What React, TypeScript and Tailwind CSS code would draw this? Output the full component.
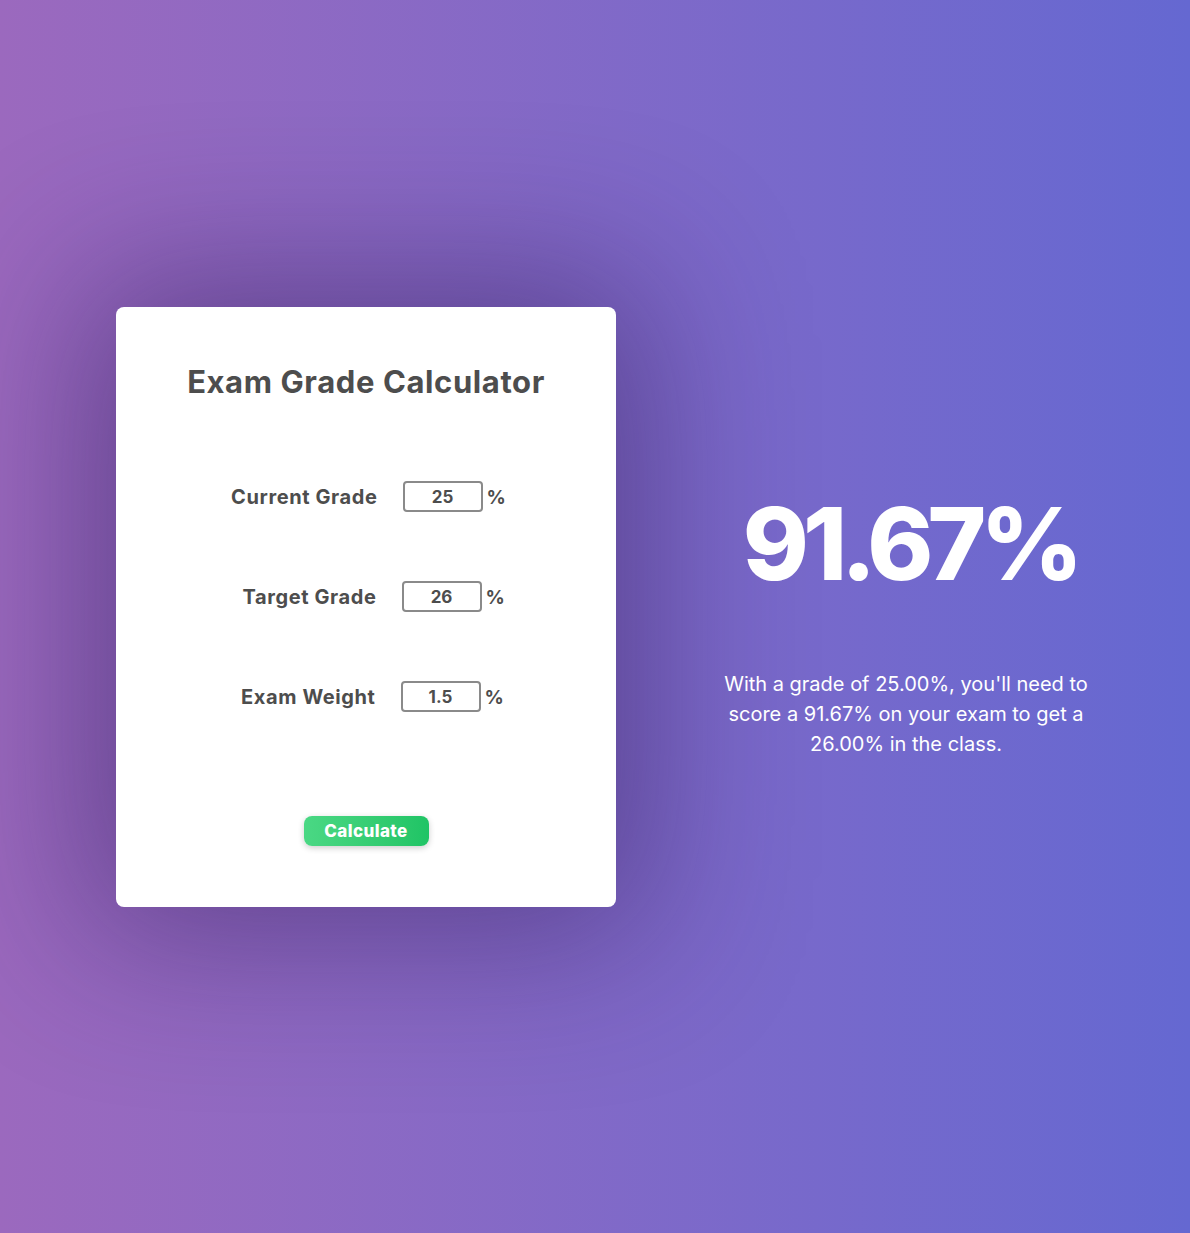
import { useState } from 'react';

const font = { fontFamily: '"Inter", "Noto Sans", sans-serif' };

function Field({ label, value, onChange, shift }: { label: string; value: string; onChange: (v: string) => void; shift: string }) {
  return (
    <div className={`flex items-center justify-center h-[31px] ${shift}`}>
      <label className="w-[150px] text-right text-[20px] font-bold text-[#4d4d4d] mr-[25px] tracking-[0.6px]">{label}</label>
      <input
        value={value}
        onChange={(e) => onChange(e.target.value)}
        className="w-[80px] h-[31px] border-2 border-[#8a8a8a] rounded-[4px] text-center text-[17px] font-bold text-[#4d4d4d] outline-none"
        style={font}
      />
      <span className="w-[18px] ml-[4px] text-[19px] font-bold text-[#4d4d4d] leading-[31px] pt-[2px]">%</span>
    </div>
  );
}

export default function App() {
  const [current, setCurrent] = useState('25');
  const [target, setTarget] = useState('26');
  const [weight, setWeight] = useState('1.5');

  const c = parseFloat(current) || 0;
  const t = parseFloat(target) || 0;
  const w = parseFloat(weight) || 0;
  const needed = w ? ((t - c * (1 - w / 100)) / (w / 100)) : 0;
  const result = needed.toFixed(2);

  return (
    <div
      className="min-h-[1233px] w-full bg-gradient-to-r from-[#9b69be] to-[#6568d1] flex items-start pt-[307px] pl-[116px]"
      style={font}
    >
      <div className="w-[500px] h-[600px] bg-white rounded-[8px] shadow-[0_0_160px_30px_rgba(40,20,80,0.45)] flex flex-col items-center pt-[58px]">
        <h1 className="text-[31px] font-bold text-[#4d4d4d] tracking-[0.6px] leading-[34px]">Exam Grade Calculator</h1>
        <div className="mt-[82px] flex flex-col gap-[69px]">
          <Field label="Current Grade" value={current} onChange={setCurrent} shift="" />
          <Field label="Target Grade" value={target} onChange={setTarget} shift="pr-[2px]" />
          <Field label="Exam Weight" value={weight} onChange={setWeight} shift="pr-[4px]" />
        </div>
        <button className="mt-[104px] w-[125px] h-[30px] pt-[2px] rounded-[8px] bg-gradient-to-r from-[#4ad884] to-[#1fc465] text-white text-[17px] font-extrabold tracking-[0.4px] shadow-[0_2px_6px_rgba(0,0,0,0.2)]">
          Calculate
        </button>
      </div>
      <div className="ml-[100px] w-[380px] flex flex-col items-center text-white mt-[182px]">
        <div className="text-[100px] font-extrabold leading-[110px] tracking-[-6px] pl-[8px]">{result}%</div>
        <p className="mt-[70px] text-[20px] leading-[30px] text-center">
          With a grade of {c.toFixed(2)}%, you'll need to score a {result}% on your exam to get a {t.toFixed(2)}% in the class.
        </p>
      </div>
    </div>
  );
}
